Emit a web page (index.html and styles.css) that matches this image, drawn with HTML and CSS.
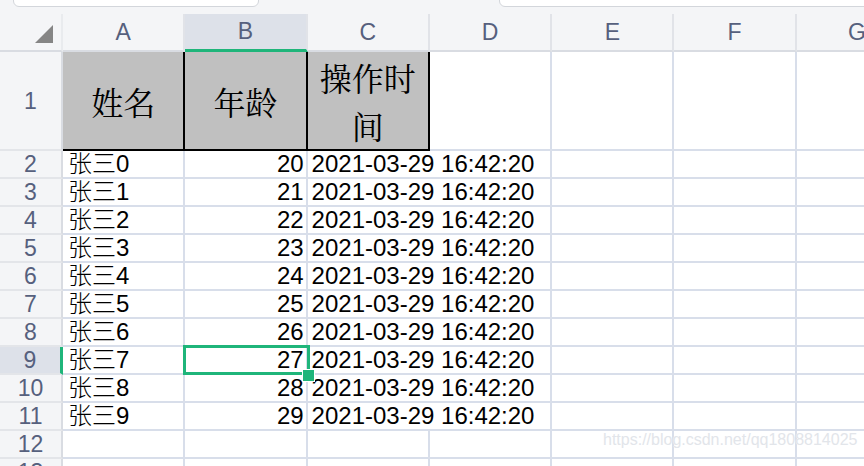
FILE: index.html
```html
<!DOCTYPE html>
<html lang="zh">
<head>
<meta charset="utf-8">
<title>Sheet</title>
<link rel="stylesheet" href="styles.css">
</head>
<body>
<div class="app">
  <div class="topbar">
    <div class="box box-name"></div>
    <div class="box box-formula"></div>
  </div>
  <div class="sheet">
    <div class="ch corner"><span class="tri"></span></div>
    <div class="ch">A</div>
    <div class="ch ch-active">B</div>
    <div class="ch">C</div>
    <div class="ch">D</div>
    <div class="ch">E</div>
    <div class="ch">F</div>
    <div class="ch">G</div>

    <div class="rh">1</div>
    <div class="c h">姓名</div>
    <div class="c h">年龄</div>
    <div class="c h">操作时间</div>
    <div class="c"></div><div class="c"></div><div class="c"></div><div class="c"></div>

    <div class="rh">2</div><div class="c t">张三0</div><div class="c n">20</div><div class="c d">2021-03-29 16:42:20</div><div class="c"></div><div class="c"></div><div class="c"></div>
    <div class="rh">3</div><div class="c t">张三1</div><div class="c n">21</div><div class="c d">2021-03-29 16:42:20</div><div class="c"></div><div class="c"></div><div class="c"></div>
    <div class="rh">4</div><div class="c t">张三2</div><div class="c n">22</div><div class="c d">2021-03-29 16:42:20</div><div class="c"></div><div class="c"></div><div class="c"></div>
    <div class="rh">5</div><div class="c t">张三3</div><div class="c n">23</div><div class="c d">2021-03-29 16:42:20</div><div class="c"></div><div class="c"></div><div class="c"></div>
    <div class="rh">6</div><div class="c t">张三4</div><div class="c n">24</div><div class="c d">2021-03-29 16:42:20</div><div class="c"></div><div class="c"></div><div class="c"></div>
    <div class="rh">7</div><div class="c t">张三5</div><div class="c n">25</div><div class="c d">2021-03-29 16:42:20</div><div class="c"></div><div class="c"></div><div class="c"></div>
    <div class="rh">8</div><div class="c t">张三6</div><div class="c n">26</div><div class="c d">2021-03-29 16:42:20</div><div class="c"></div><div class="c"></div><div class="c"></div>
    <div class="rh rh-active">9</div><div class="c t">张三7</div><div class="c n sel-cell">27<span class="sel"></span><span class="handle"></span></div><div class="c d">2021-03-29 16:42:20</div><div class="c"></div><div class="c"></div><div class="c"></div>
    <div class="rh">10</div><div class="c t">张三8</div><div class="c n">28</div><div class="c d">2021-03-29 16:42:20</div><div class="c"></div><div class="c"></div><div class="c"></div>
    <div class="rh">11</div><div class="c t">张三9</div><div class="c n">29</div><div class="c d">2021-03-29 16:42:20</div><div class="c"></div><div class="c"></div><div class="c"></div>

    <div class="rh">12</div><div class="c"></div><div class="c"></div><div class="c"></div><div class="c"></div><div class="c"></div><div class="c"></div><div class="c"></div>
    <div class="rh">13</div><div class="c"></div><div class="c"></div><div class="c"></div><div class="c"></div><div class="c"></div><div class="c"></div><div class="c"></div>
  </div>
  <div class="watermark">https://blog.csdn.net/qq1808814025</div>
</div>
</body>
</html>
```

FILE: styles.css
```css
html, body {
  margin: 0;
  padding: 0;
  background: #ffffff;
  overflow: hidden;
  width: 864px;
  height: 466px;
}

.app {
  position: relative;
  width: 864px;
  height: 466px;
  overflow: hidden;
  font-family: "Liberation Sans", "Noto Sans CJK SC", sans-serif;
}

.topbar {
  height: 14px;
  background: #f4f5f7;
  display: flex;
  padding-left: 13px;
  overflow: hidden;
}

.box {
  height: 18px;
  margin-top: -11px;
  background: #ffffff;
  border: 1.5px solid #d3d6db;
  border-radius: 6px;
  box-sizing: border-box;
  flex: none;
}

.box-name {
  width: 246px;
}

.box-formula {
  width: 420px;
  margin-left: 240px;
}

.sheet {
  display: grid;
  grid-template-columns: 63px repeat(7, 122.3px);
  grid-template-rows: 38px 99px repeat(12, 28px);
  width: max-content;
}

.ch {
  background: #f4f5f7;
  border-right: 2px solid #e1e3e8;
  border-bottom: 2px solid #d9dce2;
  box-sizing: border-box;
  display: flex;
  align-items: center;
  justify-content: center;
  font-size: 23px;
  color: #56607d;
}

.corner {
  position: relative;
  border-right: 2px solid #e9ebee;
}

.tri {
  position: absolute;
  right: 8px;
  bottom: 7px;
  width: 0;
  height: 0;
  border-style: solid;
  border-width: 0 0 18px 18px;
  border-color: transparent transparent #858585 transparent;
}

.ch-active {
  background: #dde1e9;
  border-bottom: 3px solid #1fb57a;
}

.rh {
  background: #f4f5f7;
  border-right: 2px solid #d9dce2;
  border-bottom: 2px solid #e3e5e9;
  box-sizing: border-box;
  display: flex;
  align-items: center;
  justify-content: center;
  font-size: 23px;
  line-height: 24px;
  color: #56607d;
}

.rh-active {
  background: #dde1e9;
  border-right: 3px solid #1fb57a;
}

.c {
  border-right: 2px solid #d8deea;
  border-bottom: 2px solid #d8deea;
  box-sizing: border-box;
  font-size: 24px;
  line-height: 24px;
  color: #000000;
  display: flex;
  align-items: center;
  white-space: nowrap;
}

.h {
  background: #c0c0c0;
  border-right: 2px solid #000000;
  border-bottom: 2px solid #000000;
  font-family: "Noto Serif CJK SC", "Noto Sans CJK SC", serif;
  font-size: 32px;
  line-height: 48px;
  text-align: center;
  justify-content: center;
  white-space: normal;
  word-break: break-all;
  padding: 0 2px;
}

.t {
  padding-left: 5px;
  font-family: "Liberation Sans", "Noto Sans CJK SC", sans-serif;
  font-weight: 300;
}

.n {
  justify-content: flex-end;
  padding-right: 2px;
}

.d {
  grid-column: span 2;
  padding-left: 4px;
}

.sel-cell {
  position: relative;
}

.sel {
  position: absolute;
  left: -2px;
  top: -2px;
  right: -4px;
  bottom: -2px;
  border: 3px solid #1fb57a;
  pointer-events: none;
  z-index: 1;
}

.handle {
  position: absolute;
  right: -9px;
  bottom: -9px;
  width: 11px;
  height: 11px;
  background: #1fb57a;
  border: 1.5px solid #ffffff;
  z-index: 2;
}

.watermark {
  position: absolute;
  left: 603px;
  top: 431px;
  font-family: "Liberation Sans", sans-serif;
  font-size: 16px;
  line-height: 18px;
  color: #e2e5ea;
  text-shadow: 0 0 1px rgba(255, 255, 255, 0.9);
  white-space: nowrap;
}
```
